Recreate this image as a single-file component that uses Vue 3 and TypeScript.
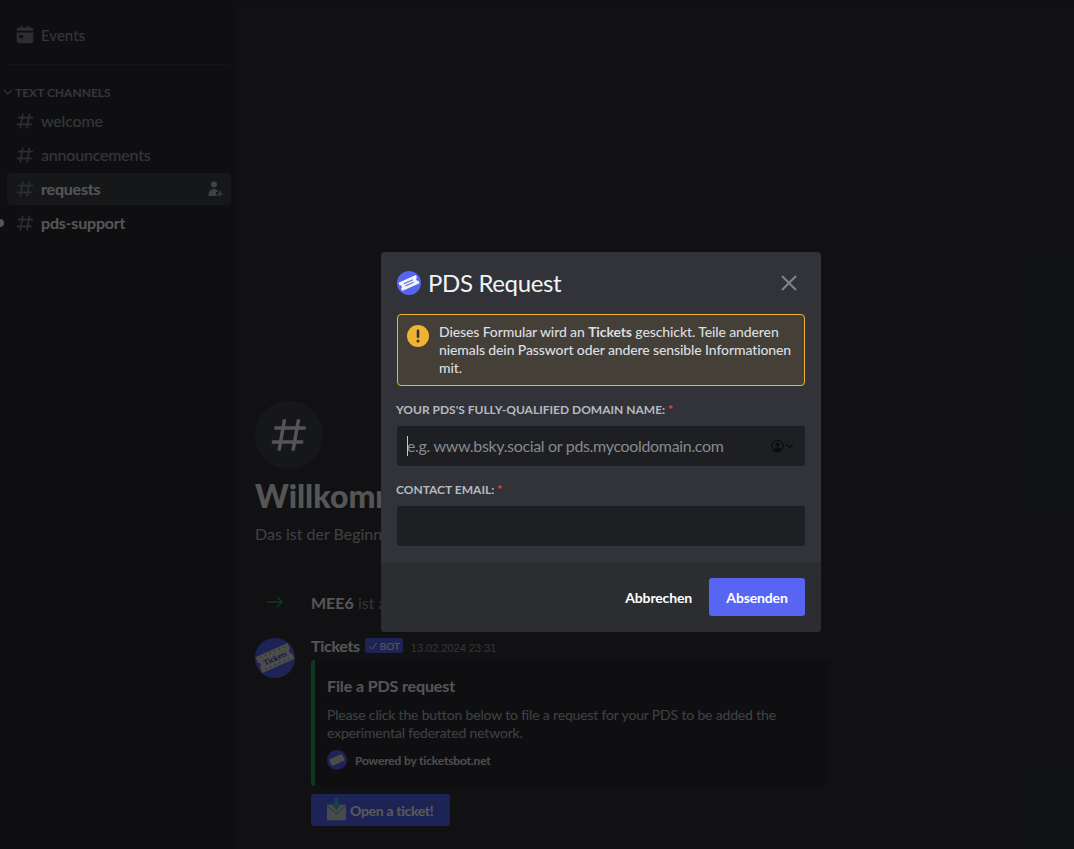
<script setup lang="ts">
const hash = "M5.88657 21C5.57547 21 5.3399 20.7189 5.39427 20.4126L6.00001 17H2.59511C2.28449 17 2.04905 16.7198 2.10259 16.4138L2.27759 15.4138C2.31946 15.1746 2.52722 15 2.77011 15H6.35001L7.41001 9H4.00511C3.69449 9 3.45905 8.71977 3.51259 8.41381L3.68759 7.41381C3.72946 7.17456 3.93722 7 4.18011 7H7.76001L8.39677 3.41262C8.43914 3.17391 8.64664 3 8.88907 3H9.87344C10.1845 3 10.4201 3.28107 10.3657 3.58738L9.76001 7H15.76L16.3968 3.41262C16.4391 3.17391 16.6466 3 16.8891 3H17.8734C18.1845 3 18.4201 3.28107 18.3657 3.58738L17.76 7H21.1649C21.4755 7 21.711 7.28023 21.6574 7.58619L21.4824 8.58619C21.4406 8.82544 21.2328 9 20.9899 9H17.41L16.35 15H19.7549C20.0655 15 20.301 15.2802 20.2474 15.5862L20.0724 16.5862C20.0306 16.8254 19.8228 17 19.5799 17H16L15.3632 20.5874C15.3209 20.8261 15.1134 21 14.8709 21H13.8866C13.5755 21 13.3399 20.7189 13.3943 20.4126L14 17H8.00001L7.36325 20.5874C7.32088 20.8261 7.11337 21 6.87094 21H5.88657ZM9.41045 9L8.35045 15H14.3504L15.4104 9H9.41045Z";

interface Channel { name: string; state: "" | "active" | "unread" }
const channels: Channel[] = [
  { name: "welcome", state: "" },
  { name: "announcements", state: "" },
  { name: "requests", state: "active" },
  { name: "pds-support", state: "unread" },
];
const perforations: number[] = [7, 12, 17, 22, 27, 32];
</script>

<template>
  <div class="page">
    <div class="top-strip"></div>
    <div class="columns">
      <aside class="sidebar">
        <div class="events">
          <svg class="ch-icon" viewBox="0 0 24 24"><path fill="currentColor" d="M7 2a1 1 0 0 1 2 0v1h6V2a1 1 0 1 1 2 0v1h2a3 3 0 0 1 3 3v1H2V6a3 3 0 0 1 3-3h2V2ZM2 9h20v10a3 3 0 0 1-3 3H5a3 3 0 0 1-3-3V9Zm4 3a1 1 0 0 0-1 1v2a1 1 0 0 0 1 1h3a1 1 0 0 0 1-1v-2a1 1 0 0 0-1-1H6Z"/></svg>
          <span class="ch-name">Events</span>
        </div>
        <div class="side-divider"></div>
        <div class="category">
          <svg class="chev" viewBox="0 0 12 12"><path d="M2 4l4 4 4-4" fill="none" stroke="currentColor" stroke-width="1.1"/></svg>
          <span>TEXT CHANNELS</span>
        </div>
        <div v-for="c in channels" :key="c.name" class="channel" :class="c.state">
          <i v-if="c.state === 'unread'" class="unread-dot"></i>
          <svg class="ch-icon hash" viewBox="0 0 24 24"><path fill="currentColor" :d="hash"/></svg>
          <span class="ch-name">{{ c.name }}</span>
          <svg v-if="c.state === 'active'" class="invite" viewBox="0 0 16 16">
            <circle cx="7" cy="3.6" r="3" fill="currentColor"/>
            <path fill="currentColor" d="M1.5 15c0-4 2-7 5.5-7 1.6 0 2.8.6 3.6 1.6V11H9v3h1.6v1Z"/>
            <path d="M13 10v5.6M10.2 12.8h5.6" stroke="currentColor" stroke-width="1.2" fill="none"/>
          </svg>
        </div>
      </aside>

      <main class="main">
        <div class="welcome-icon">
          <svg viewBox="0 0 24 24"><path fill="currentColor" :d="hash"/></svg>
        </div>
        <h1 class="welcome-title">Willkommen bei #requests!</h1>
        <p class="welcome-desc">Das ist der Beginn des Kanals #requests.</p>
        <div class="main-divider"></div>

        <div class="join-row">
          <svg class="join-arrow" viewBox="0 0 18 18"><path d="M1 9h15M11 4l5 5-5 5" fill="none" stroke="currentColor" stroke-width="1.4"/></svg>
          <span class="join-text"><b>MEE6</b> ist auf dem Server gelandet.</span>
        </div>

        <div class="message">
          <svg class="avatar" viewBox="0 0 40 40">
            <circle cx="20" cy="20" r="20" fill="#5865f2"/>
            <g transform="rotate(-24 20 20)">
              <path fill="#dedbd0" d="M2.5 11.5h35v6a2.6 2.6 0 0 0 0 5v6h-35v-6a2.6 2.6 0 0 0 0-5Z"/>
              <circle v-for="p in perforations" :key="'a' + p" :cx="p + 0.5" cy="13.6" r="0.6" fill="#3a44b0"/>
              <circle v-for="p in perforations" :key="'b' + p" :cx="p + 0.5" cy="26.4" r="0.6" fill="#3a44b0"/>
              <text x="20" y="22.8" text-anchor="middle" class="ticket-text">Tickets</text>
            </g>
          </svg>
          <div class="msg-body">
            <div class="msg-head">
              <span class="author">Tickets</span>
              <span class="bot-tag">
                <svg viewBox="0 0 12 12"><path d="M1.5 6.5l3 3 6-7" fill="none" stroke="currentColor" stroke-width="1.2"/></svg>
                BOT
              </span>
              <span class="stamp">13.02.2024 23:31</span>
            </div>
            <div class="embed">
              <div class="embed-title">File a PDS request</div>
              <div class="embed-text">Please click the button below to file a request for your PDS to be added the experimental federated network.</div>
              <div class="embed-foot">
                <svg class="foot-avatar" viewBox="0 0 20 20">
                  <circle cx="10" cy="10" r="10" fill="#5865f2"/>
                  <rect x="3" y="6.5" width="14" height="7" rx="1" fill="#dedbd0" transform="rotate(-24 10 10)"/>
                </svg>
                <span>Powered by ticketsbot.net</span>
              </div>
            </div>
            <button class="open-btn" type="button">
              <svg class="mail" viewBox="0 0 20 24">
                <path fill="#ccd6dd" d="M0 7h20v15a1.2 1.2 0 0 1-1.2 1.2H1.2A1.2 1.2 0 0 1 0 22Z"/>
                <path fill="#99aab5" d="M0 7l10 8.5L20 7v2l-10 8.5L0 9Z"/>
                <path fill="#4fb3d9" d="M8 0h4v6h3.4L10 13 4.6 6H8Z"/>
              </svg>
              <span>Open a ticket!</span>
            </button>
          </div>
        </div>
      </main>
    </div>

    <div class="overlay"></div>

    <section class="modal">
      <div class="modal-body">
        <header class="modal-head">
          <svg class="modal-logo" viewBox="0 0 24 24">
            <circle cx="12" cy="12" r="12" fill="#5865f2"/>
            <g transform="rotate(-24 12 12)">
              <path fill="#f2f3f5" d="M2.5 7.5h19v3a1.5 1.5 0 0 0 0 3v3h-19v-3a1.5 1.5 0 0 0 0-3Z"/>
              <rect x="7" y="10" width="10" height="1.2" fill="#5865f2"/>
              <rect x="7.5" y="12.6" width="9" height="1.1" fill="#5865f2"/>
            </g>
          </svg>
          <h2 class="modal-title">PDS Request</h2>
          <svg class="modal-close" viewBox="0 0 24 24"><path fill="none" stroke="currentColor" stroke-width="2" d="M5 5l14 14M19 5 5 19"/></svg>
        </header>

        <div class="warn">
          <svg class="warn-icon" viewBox="0 0 22 22">
            <circle cx="11" cy="11" r="11" fill="#f0b232"/>
            <rect x="9.7" y="4.6" width="2.6" height="8.4" rx="1.3" fill="#313338"/>
            <circle cx="11" cy="16" r="1.5" fill="#313338"/>
          </svg>
          <p>Dieses Formular wird an <b>Tickets</b> geschickt. Teile anderen niemals dein Passwort oder andere sensible Informationen mit.</p>
        </div>

        <label class="field-label">YOUR PDS'S FULLY-QUALIFIED DOMAIN NAME: <em>*</em></label>
        <div class="input-box">
          <i class="caret"></i>
          <input class="field-input" placeholder="e.g. www.bsky.social or pds.mycooldomain.com" />
          <svg class="pm-icon" viewBox="0 0 24 14">
            <circle cx="6.5" cy="7" r="5.6" fill="none" stroke="#0b0c0e" stroke-width="1.2"/>
            <circle cx="6.5" cy="5.4" r="2.1" fill="#0b0c0e"/>
            <path fill="#0b0c0e" d="M2.8 10.6c.8-1.6 2-2.2 3.7-2.2s2.9.6 3.7 2.2a5.2 5.2 0 0 1-7.4 0Z"/>
            <path d="M15.5 5.5l3.2 3.2 3.2-3.2" fill="none" stroke="#0b0c0e" stroke-width="1.2"/>
          </svg>
        </div>

        <label class="field-label">CONTACT EMAIL: <em>*</em></label>
        <div class="input-box"><input class="field-input" /></div>
      </div>

      <footer class="modal-foot">
        <button class="cancel" type="button">Abbrechen</button>
        <button class="submit" type="button">Absenden</button>
      </footer>
    </section>
  </div>
</template>

<style>
html, body { margin: 0; background: #111214; }
</style>

<style scoped>
.page {
  position: relative;
  display: flex;
  flex-direction: column;
  width: 1074px;
  height: 849px;
  overflow: hidden;
  background: #313338;
  font-family: "Lato", "Liberation Sans", sans-serif;
  color: #f2f3f5;
}
.top-strip { height: 7px; flex: none; background: #2a2c30; }
.columns { flex: 1; min-height: 0; display: flex; }
.sidebar {
  width: 238px;
  flex: none;
  background: #2b2d31;
  box-sizing: border-box;
  padding: 12px 7px 0;
}
.events, .channel {
  display: flex;
  align-items: center;
  height: 32px;
  padding-left: 8px;
  color: #949ba4;
  font-size: 15px;
  font-weight: 500;
  border-radius: 4px;
}
.ch-icon { width: 20px; height: 20px; flex: none; margin-right: 6px; color: #80848e; }
.hash { width: 20px; height: 20px; }
.ch-name { margin-top: -2px; letter-spacing: -0.2px; }
.events .ch-name { margin-top: 0; letter-spacing: 0; }
.side-divider { height: 1px; margin: 13px 1px 0; background: #3a3c41; }
.category {
  display: flex;
  align-items: center;
  height: 16px;
  margin-top: 19px;
  margin-left: -4px;
  margin-bottom: 5px;
  font-size: 12px;
  font-weight: 700;
  color: #949ba4;
}
.chev { width: 12px; height: 12px; margin-left: -1px; margin-right: 1px; }
.channel { position: relative; margin-bottom: 2px; font-size: 16px; }
.channel.active { background: #404249; color: #f2f3f5; font-weight: 700; }
.channel.unread { color: #f2f3f5; font-weight: 700; }
.unread-dot {
  position: absolute;
  left: -11px;
  top: 12px;
  width: 8px;
  height: 8px;
  border-radius: 50%;
  background: #f2f3f5;
}
.invite { width: 16px; height: 16px; margin-left: auto; margin-right: 8px; color: #b5bac1; }

.main {
  flex: 1;
  min-width: 0;
  display: flex;
  flex-direction: column;
  justify-content: flex-end;
  padding: 0 17px 23px;
}
.welcome-icon {
  width: 68px;
  height: 68px;
  border-radius: 50%;
  background: #41434a;
  display: flex;
  align-items: center;
  justify-content: center;
  color: #f2f3f5;
}
.welcome-icon svg { width: 42px; height: 42px; }
.welcome-title { margin: 7px 0 8px; font-size: 32px; line-height: 40px; font-weight: 900; white-space: nowrap; }
.welcome-desc { margin: 0; font-size: 16px; line-height: 20px; color: #b5bac1; }
.main-divider { height: 1px; margin-top: 24px; background: rgba(255, 255, 255, 0.035); }
.join-row { display: flex; align-items: center; height: 22px; margin-top: 22px; font-size: 16px; color: #949ba4; }
.join-arrow { width: 18px; height: 18px; margin: 0 27px 0 11px; color: #23a559; }
.join-text b { color: #f2f3f5; font-weight: 700; }

.message { display: flex; gap: 16px; margin-top: 23px; }
.avatar { width: 40px; height: 40px; flex: none; margin-top: 2px; }
.ticket-text { font-size: 8px; font-weight: 700; fill: #3a44b0; font-family: "Liberation Serif", serif; }
.msg-body { flex: 1; min-width: 0; }
.msg-head { display: flex; align-items: flex-start; height: 22px; }
.author { font-size: 16px; line-height: 20px; font-weight: 700; letter-spacing: -0.3px; }
.bot-tag {
  display: flex;
  align-items: center;
  justify-content: center;
  gap: 2px;
  box-sizing: border-box;
  width: 38px;
  height: 15px;
  margin-left: 5px;
  margin-top: 2px;
  border-radius: 3px;
  background: #5865f2;
  font-size: 10px;
  font-weight: 500;
}
.bot-tag svg { width: 10px; height: 10px; }
.stamp { margin-left: 8px; margin-top: 4px; line-height: 16px; font-size: 11px; color: #949ba4; font-family: "Liberation Sans", sans-serif; }
.embed {
  box-sizing: border-box;
  width: 519px;
  height: 126px;
  margin-top: 2px;
  padding: 15px 16px 0 12px;
  border-left: 4px solid #23a559;
  border-radius: 4px;
  background: #2b2d31;
}
.embed-title { font-size: 16px; line-height: 22px; font-weight: 700; letter-spacing: -0.12px; }
.embed-text { margin-top: 9px; font-size: 14px; line-height: 18px; color: #b5bac1; letter-spacing: -0.17px; }
.embed-foot { display: flex; align-items: center; gap: 8px; margin-top: 8px; font-size: 12px; font-weight: 700; color: #dbdee1; letter-spacing: -0.17px; }
.foot-avatar { width: 20px; height: 20px; flex: none; }
.open-btn {
  display: flex;
  align-items: center;
  gap: 4px;
  width: 139px;
  height: 32px;
  margin-top: 8px;
  padding: 0 16px;
  border: 0;
  border-radius: 3px;
  background: #5865f2;
  color: #fff;
  font: 700 14px "Lato", sans-serif;
  letter-spacing: -0.3px;
  white-space: nowrap;
}
.mail { width: 19px; height: 23px; flex: none; margin-top: -2px; }

.overlay { position: absolute; inset: 0; background: rgba(0, 0, 0, 0.65); }

.modal {
  position: absolute;
  left: 381px;
  top: 252px;
  width: 440px;
  height: 380px;
  display: flex;
  flex-direction: column;
  border-radius: 4px;
  background: #313338;
  overflow: hidden;
}
.modal-body { flex: 1; padding: 19px 16px 0; }
.modal-head { display: flex; align-items: center; height: 24px; }
.modal-logo { width: 24px; height: 24px; flex: none; }
.modal-title { margin: 0 0 0 7px; font-size: 24px; line-height: 30px; font-weight: 400; color: #f2f3f5; letter-spacing: -0.36px; }
.modal-close { width: 24px; height: 24px; margin-left: auto; margin-right: 4px; color: #80848e; }
.warn {
  display: flex;
  box-sizing: border-box;
  height: 72px;
  margin-top: 19px;
  padding: 8px 9px;
  gap: 10px;
  border: 1px solid #f0b232;
  border-radius: 4px;
  background: rgba(240, 178, 50, 0.1);
}
.warn-icon { width: 22px; height: 22px; flex: none; margin-top: 2px; }
.warn p { margin: 0; font-size: 14px; line-height: 18px; font-weight: 500; color: #dbdee1; letter-spacing: -0.11px; }
.warn b { font-weight: 700; }
.field-label {
  display: block;
  margin-top: 16px;
  margin-left: -1px;
  height: 16px;
  line-height: 16px;
  font-size: 12px;
  font-weight: 700;
  color: #b5bac1;
}
.field-label em { font-style: normal; color: #f23f42; }
.input-box {
  position: relative;
  display: flex;
  align-items: center;
  height: 40px;
  margin-top: 8px;
  padding: 0 10px;
  border-radius: 3px;
  background: #1e1f22;
}
.field-input {
  flex: 1;
  min-width: 0;
  padding: 0 0 2px;
  border: 0;
  outline: 0;
  background: transparent;
  color: #dbdee1;
  font: 400 16px "Lato", sans-serif;
  letter-spacing: -0.33px;
}
.field-input::placeholder { color: #87898c; opacity: 1; }
.caret { position: absolute; left: 10px; top: 10px; width: 1px; height: 20px; background: #c8cad0; }
.pm-icon { width: 24px; height: 14px; flex: none; }
.modal-foot {
  display: flex;
  justify-content: flex-end;
  align-items: center;
  height: 70px;
  flex: none;
  box-sizing: border-box;
  padding: 0 16px;
  background: #2b2d31;
}
.cancel, .submit {
  height: 38px;
  border: 0;
  font: 700 14px "Lato", sans-serif;
  letter-spacing: -0.15px;
  color: #fff;
  background: transparent;
}
.cancel { padding: 0 17px; }
.submit { width: 96px; border-radius: 3px; background: #5865f2; }
</style>
